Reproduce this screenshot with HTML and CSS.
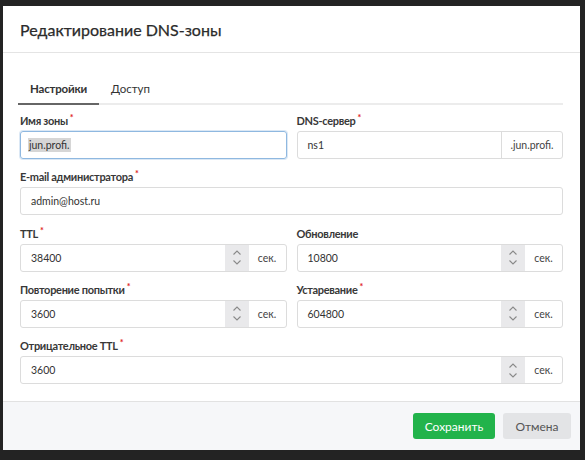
FILE: index.html
```html
<!DOCTYPE html>
<html lang="ru">
<head>
<meta charset="utf-8">
<title>Редактирование DNS-зоны</title>
<link rel="stylesheet" href="styles.css">
</head>
<body>
<div class="modal">
  <div class="modal-header">
    <h1 class="title">Редактирование DNS-зоны</h1>
  </div>
  <div class="modal-body">
    <div class="tabs">
      <div class="tab active">Настройки</div>
      <div class="tab">Доступ</div>
    </div>
    <div class="grid">
      <div class="field">
        <label class="label">Имя зоны<span class="req">*</span></label>
        <div class="input focused"><span class="value"><span class="sel">jun.profi.</span></span></div>
      </div>
      <div class="field">
        <label class="label">DNS-сервер<span class="req">*</span></label>
        <div class="input"><span class="value">ns1</span><span class="addon addon-zone">.jun.profi.</span></div>
      </div>
      <div class="field wide">
        <label class="label">E-mail администратора<span class="req">*</span></label>
        <div class="input"><span class="value">admin@host.ru</span></div>
      </div>
      <div class="field">
        <label class="label">TTL<span class="req">*</span></label>
        <div class="input"><span class="value">38400</span><span class="spin"><svg viewBox="0 0 8 5" class="chev"><path d="M0.5 4.5 L4 1 L7.5 4.5"/></svg><svg viewBox="0 0 8 5" class="chev"><path d="M0.5 0.5 L4 4 L7.5 0.5"/></svg></span><span class="addon">сек.</span></div>
      </div>
      <div class="field">
        <label class="label">Обновление</label>
        <div class="input"><span class="value">10800</span><span class="spin"><svg viewBox="0 0 8 5" class="chev"><path d="M0.5 4.5 L4 1 L7.5 4.5"/></svg><svg viewBox="0 0 8 5" class="chev"><path d="M0.5 0.5 L4 4 L7.5 0.5"/></svg></span><span class="addon">сек.</span></div>
      </div>
      <div class="field">
        <label class="label">Повторение попытки<span class="req">*</span></label>
        <div class="input"><span class="value">3600</span><span class="spin"><svg viewBox="0 0 8 5" class="chev"><path d="M0.5 4.5 L4 1 L7.5 4.5"/></svg><svg viewBox="0 0 8 5" class="chev"><path d="M0.5 0.5 L4 4 L7.5 0.5"/></svg></span><span class="addon">сек.</span></div>
      </div>
      <div class="field">
        <label class="label">Устаревание<span class="req">*</span></label>
        <div class="input"><span class="value">604800</span><span class="spin"><svg viewBox="0 0 8 5" class="chev"><path d="M0.5 4.5 L4 1 L7.5 4.5"/></svg><svg viewBox="0 0 8 5" class="chev"><path d="M0.5 0.5 L4 4 L7.5 0.5"/></svg></span><span class="addon">сек.</span></div>
      </div>
      <div class="field wide">
        <label class="label">Отрицательное TTL<span class="req">*</span></label>
        <div class="input"><span class="value">3600</span><span class="spin"><svg viewBox="0 0 8 5" class="chev"><path d="M0.5 4.5 L4 1 L7.5 4.5"/></svg><svg viewBox="0 0 8 5" class="chev"><path d="M0.5 0.5 L4 4 L7.5 0.5"/></svg></span><span class="addon">сек.</span></div>
      </div>
    </div>
  </div>
  <div class="modal-footer">
    <button class="btn btn-save">Сохранить</button>
    <button class="btn btn-cancel">Отмена</button>
  </div>
</div>
</body>
</html>
```

FILE: styles.css
```css
html, body {
  margin: 0;
  padding: 0;
  background: #232323;
  font-family: Lato, "Open Sans", sans-serif;
  color: #333;
}
body {
  padding: 6px 0 0 3px;
  height: 460px;
  box-sizing: border-box;
}
.modal {
  width: 577px;
  height: 444px;
  background: #fff;
  display: flex;
  flex-direction: column;
}
.modal-header {
  height: 47px;
  border-bottom: 1px solid #e4e4e4;
  padding: 0 17px;
  display: flex;
  align-items: center;
  box-sizing: border-box;
}
.title {
  margin: 0;
  font-size: 16px;
  font-weight: 400;
  color: #2b2b2b;
  padding-top: 1px;
  -webkit-text-stroke: 0.25px #2b2b2b;
}
.modal-body {
  flex: 1;
  padding: 22px 17px 0;
}
.tabs {
  display: flex;
  border-bottom: 2px solid #ececec;
  margin-left: -2px;
}
.tab {
  font-size: 11.5px;
  padding: 6px 12px 6px;
  line-height: 16px;
  margin-bottom: -2px;
  border-bottom: 2px solid transparent;
  color: #333;
}
.tab.active {
  border-bottom-color: #666;
  font-weight: 700;
  letter-spacing: -0.2px;
}
.grid {
  display: grid;
  grid-template-columns: 1fr 1fr;
  column-gap: 10px;
  row-gap: 10.3px;
  margin-top: 8px;
}
.field.wide {
  grid-column: 1 / 3;
}
.label {
  display: block;
  font-size: 11px;
  font-weight: 700;
  line-height: 15px;
  margin-bottom: 3px;
  letter-spacing: -0.3px;
  color: #383838;
}
.req {
  color: #e02424;
  font-size: 9px;
  vertical-align: top;
  margin-left: 2px;
  position: relative;
  top: -3px;
}
.input {
  height: 28px;
  box-sizing: border-box;
  border: 1px solid #dcdcdc;
  border-radius: 3px;
  display: flex;
  align-items: stretch;
  font-size: 10.5px;
  overflow: hidden;
}
.input.focused {
  border-color: #8fb8e0;
  box-shadow: 0 0 0 1px #dbe8f5;
}
.value {
  flex: 1;
  display: flex;
  align-items: center;
  padding: 0 10px;
}
.sel {
  background: #d6d6d6;
  padding: 1px 1px;
  margin-left: -3px;
}
.spin {
  width: 24px;
  background: #e9e9eb;
  display: flex;
  flex-direction: column;
  justify-content: center;
  align-items: center;
  gap: 5px;
}
.chev {
  width: 8px;
  height: 5px;
  fill: none;
  stroke: #8a8a8a;
  stroke-width: 1.1;
}
.addon {
  display: flex;
  align-items: center;
  padding: 0 8px 0 8px;
  width: 37px;
  box-sizing: border-box;
  justify-content: center;
  color: #444;
}
.addon-zone {
  width: 61px;
  border-left: 1px solid #dcdcdc;
  padding: 0 4px;
}
.modal-footer {
  height: 49px;
  background: #f6f7f9;
  border-top: 1px solid #e2e2e2;
  box-sizing: border-box;
  display: flex;
  justify-content: flex-end;
  align-items: center;
  gap: 8px;
  padding: 0 9px 0 0;
}
.btn {
  height: 26px;
  border: none;
  border-radius: 3px;
  font-family: Lato, "Open Sans", sans-serif;
  font-size: 12px;
  padding: 0;
}
.btn-save {
  width: 82px;
  background: #22b34b;
  color: #fff;
}
.btn-cancel {
  width: 68px;
  background: #e3e4e6;
  color: #555;
}
```
